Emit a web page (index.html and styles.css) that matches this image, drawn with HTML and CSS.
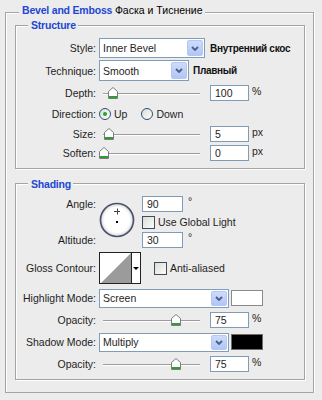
FILE: index.html
```html
<!doctype html>
<html>
<head>
	<title>Bevel and Emboss</title>
	<link rel="stylesheet" href="styles.css">
</head>
<body>
	<svg class="defs" width="0" height="0">
		<symbol id="thumb" viewBox="0 0 10 12">
			<path d="M0.5 4.5 L5 0.5 L9.5 4.5 V11.5 H0.5 Z" fill="#fff" stroke="#7c7c7c"/>
			<rect x="1" y="9" width="8" height="2" fill="#2e9b34"/>
		</symbol>
		<symbol id="chev" viewBox="0 0 8 5">
			<path d="M1 1 L4 4 L7 1" fill="none" stroke="#4a5f86" stroke-width="1.8"/>
		</symbol>
	</svg>

	<div class="group outer">
		<div class="legend top"><b>Bevel and Emboss</b> <span>Фаска и Тиснение</span></div>

		<!-- structure -->
		<div class="group structure">
			<div class="legend">Structure</div>
			<div class="rows">
				<div class="row h22">
					<label>Style:</label>
					<div class="select w-style"><span>Inner Bevel</span><i><svg><use href="#chev"/></svg></i></div>
					<b class="ru">Внутренний скос</b>
				</div>
				<div class="row h23">
					<label>Technique:</label>
					<div class="select w-tech"><span>Smooth</span><i><svg><use href="#chev"/></svg></i></div>
					<b class="ru tight">Плавный</b>
				</div>
				<div class="row h21">
					<label>Depth:</label>
					<div class="slider"><div class="track"><svg class="thumb" style="left: 10%"><use href="#thumb"/></svg></div></div>
					<div class="num">100</div>
					<span class="unit">%</span>
				</div>
				<div class="row h21">
					<label>Direction:</label>
					<span class="radio on"></span><span class="opt">Up</span>
					<span class="radio"></span><span class="opt">Down</span>
				</div>
				<div class="row h19">
					<label>Size:</label>
					<div class="slider"><div class="track"><svg class="thumb" style="left: 5%"><use href="#thumb"/></svg></div></div>
					<div class="num">5</div>
					<span class="unit">px</span>
				</div>
				<div class="row h19">
					<label>Soften:</label>
					<div class="slider"><div class="track"><svg class="thumb" style="left: 0%"><use href="#thumb"/></svg></div></div>
					<div class="num">0</div>
					<span class="unit">px</span>
				</div>
			</div>
		</div>

		<!-- shading -->
		<div class="group shading">
			<div class="legend">Shading</div>
			<div class="angle">
				<label class="a1">Angle:</label>
				<svg class="dial" width="36" height="36" viewBox="0 0 36 36">
					<defs>
						<radialGradient id="dg" cx="50%" cy="50%" r="50%">
							<stop offset="75%" stop-color="#fff"/>
							<stop offset="100%" stop-color="#d8d8dc"/>
						</radialGradient>
					</defs>
					<circle cx="18" cy="18" r="16.5" fill="url(#dg)" stroke="#4d546a" stroke-width="1.7"/>
					<path d="M15 9.5 H21 M18.5 6.5 V12.5" stroke="#444" stroke-width="1"/>
					<rect x="17" y="19" width="2" height="2" fill="#000"/>
				</svg>
				<div class="a-val a1"><div class="num wide">90</div><span class="deg">°</span></div>
				<div class="a-val a2"><span class="check"></span><span class="opt">Use Global Light</span></div>
				<label class="a3">Altitude:</label>
				<div class="a-val a3"><div class="num wide">30</div><span class="deg">°</span></div>
			</div>
			<div class="row h32 gloss">
				<label>Gloss Contour:</label>
				<div class="contour">
					<svg width="31" height="30" viewBox="0 0 31 30"><polygon points="1,30 31,0 31,30" fill="#9b9b9b"/></svg>
					<i></i>
				</div>
				<span class="check aa"></span><span class="opt">Anti-aliased</span>
			</div>
			<div class="row h20 hl">
				<label>Highlight Mode:</label>
				<div class="select w-mode"><span>Screen</span><i><svg><use href="#chev"/></svg></i></div>
				<div class="swatch white"></div>
			</div>
			<div class="row h24">
				<label>Opacity:</label>
				<div class="slider"><div class="track"><svg class="thumb" style="left: 77%"><use href="#thumb"/></svg></div></div>
				<div class="num">75</div>
				<span class="unit">%</span>
			</div>
			<div class="row h20">
				<label>Shadow Mode:</label>
				<div class="select w-mode"><span>Multiply</span><i><svg><use href="#chev"/></svg></i></div>
				<div class="swatch black"></div>
			</div>
			<div class="row h24">
				<label>Opacity:</label>
				<div class="slider"><div class="track"><svg class="thumb" style="left: 77%"><use href="#thumb"/></svg></div></div>
				<div class="num">75</div>
				<span class="unit">%</span>
			</div>
		</div>
	</div>
</body>
</html>
```

FILE: styles.css
```css
body {margin: 0; background: #ececec; font-family: "Liberation Sans", Arial, sans-serif; font-size: 10.5px; color: #1e1e1e;}
.defs {position: absolute;}

/* etched group boxes */
.group {border: 1px solid #a4a4a4; box-shadow: inset 1px 1px #fff, 1px 1px #fff; box-sizing: border-box;}
.outer {margin: 12px 0 0 5px; width: 309px; padding: 0 8px 12px 9px;}
.structure {margin-top: 8px; height: 144px;}
.shading {margin-top: 14px; height: 197px;}

.legend {width: fit-content; background: #ececec; padding: 0 2px 0 3px; line-height: 14px; margin: -8px 0 0 12px; font-weight: bold; color: #2147d4; letter-spacing: -0.2px;}
.legend.top {margin: -10px 0 0 4px;}
.legend.top span {font-weight: normal; color: #000; letter-spacing: 0;}
.shading .legend {margin-top: -7px;}

.rows {margin-top: 5px;}
.shading .angle {margin-top: 4px;}

.row {display: flex; align-items: center;}
.h19 {height: 19px;} .h20 {height: 20px;} .h21 {height: 21px;} .h22 {height: 22px;}
.h23 {height: 23px;} .h24 {height: 24px;} .h32 {height: 32px;}
.gloss {margin-top: 3px;}
.hl {margin-top: 4px;}

label {width: 80px; text-align: right; margin-right: 3px; flex: none;}

/* dropdowns */
.select {display: flex; align-items: stretch; box-sizing: border-box; border: 1px solid #7f9db9; background: #fff; flex: none;}
.select span {flex: 1; padding-left: 3px; display: flex; align-items: center;}
.select i {width: 14px; margin: 1px; border: 1px solid #b4c7f2; border-radius: 2px; background: linear-gradient(#cddbfc, #b2c6f5); display: flex; align-items: center; justify-content: center;}
.select i svg {width: 8px; height: 5px;}
.w-style {width: 106px; height: 20px;}
.w-tech {width: 90px; height: 21px;}
.w-mode {width: 130px; height: 19px;}
.ru {margin-left: 5px; font-weight: bold; font-size: 10px; color: #111; letter-spacing: -0.3px;}
.ru.tight {margin-left: 4px;}

/* sliders */
.slider {position: relative; width: 108px; height: 12px; flex: none;}
.slider::before {content: ''; position: absolute; left: 4px; right: 7px; top: 6px; height: 1px; background: #9c9c9c; box-shadow: 0 1px #fff;}
.track {position: absolute; left: 5px; right: 9px; top: 0; bottom: 0;}
.thumb {position: absolute; top: 0; width: 10px; height: 12px; margin-left: -5px;}

.num {width: 39px; height: 16px; box-sizing: border-box; border: 1px solid #7f9db9; background: #fff; padding-left: 4px; line-height: 14px; margin-left: 3px; flex: none;}
.num.wide {width: 41px; margin-left: 0;}
.unit {margin-left: 3px; margin-bottom: 4px;}

/* radios and checks */
.radio {width: 12px; height: 12px; box-sizing: border-box; border: 1px solid #2a4f78; border-radius: 50%; background: linear-gradient(135deg, #dcdcd6, #fff); display: flex; align-items: center; justify-content: center;}
.radio.on::after {content: ''; width: 4px; height: 4px; border-radius: 50%; background: #24a62b;}
.opt {margin: 0 14px 0 3px;}
.check {width: 13px; height: 13px; box-sizing: border-box; border: 1px solid #3d4b5e; background: linear-gradient(135deg, #dcdcd6, #fbfbfa); flex: none;}

/* angle block */
.angle {display: grid; grid-template-columns: 80px 40px auto; column-gap: 3px; grid-template-rows: 18px 18px 18px; align-items: center;}
.angle label {margin: 0;}
.a1 {grid-row: 1;} .a2 {grid-row: 2;} .a3 {grid-row: 3;}
.angle label {grid-column: 1;}
.dial {grid-column: 2; grid-row: 1 / 4; align-self: start; margin-top: 7px;}
.a-val {grid-column: 3; display: flex; align-items: center;}
.deg {margin: 0 0 6px 5px;}

/* contour */
.contour {display: flex; width: 42px; height: 32px; box-sizing: border-box; border: 1px solid #222; background: #fff; flex: none;}
.contour svg {display: block; border-right: 1px solid #222;}
.contour i {flex: 1; display: flex; align-items: center; justify-content: center;}
.contour i::after {content: ''; border: 3px solid transparent; border-top: 3px solid #000; border-bottom: 0;}
.aa {margin-left: 13px;}

.swatch {width: 32px; height: 16px; box-sizing: border-box; margin-left: 2px; border: 1px solid #8a8a8a;}
.swatch.white {background: #fff;}
.swatch.black {background: #000; border-color: #6d6d6d;}
```
